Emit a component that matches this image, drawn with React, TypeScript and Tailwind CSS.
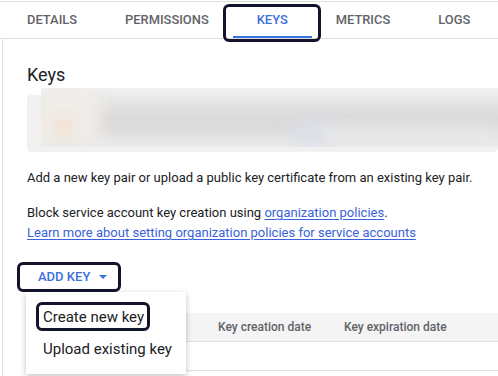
import React from "react";

const tabs = ["DETAILS", "PERMISSIONS", "KEYS", "METRICS", "LOGS"];

function Highlight({ className }: { className: string }) {
  return <div className={`pointer-events-none absolute rounded-[6px] border-[3px] border-[#12142b] ${className}`} />;
}

function TabBar() {
  return (
    <div className="flex h-[38px] border-y border-[#e0e0e0] pl-[3px]">
      {tabs.map((t) => {
        const active = t === "KEYS";
        return (
          <div
            key={t}
            className={`relative flex h-full items-center px-6 text-[12.9px] font-medium ${
              active ? "text-[#3b6fdc]" : "text-[#5f6368]"
            }`}
          >
            {t}
            {active && (
              <>
                <div className="absolute bottom-0 left-0 right-0 h-[2px] bg-[#3b6fdc]" />
                <Highlight className="-left-[10px] -right-[9px] top-[2px] h-[38px]" />
              </>
            )}
          </div>
        );
      })}
    </div>
  );
}

function BlurredKey() {
  return (
    <div className="relative mt-2 h-[57px] rounded bg-[#f1f1f1]">
      <div className="absolute -top-[7px] left-[14px] right-0 h-[59px] overflow-hidden bg-[linear-gradient(180deg,#f2f2f2_0%,#e4e4e4_25%,#dadada_50%,#dcdcdc_70%,#ececec_100%)]">
        <div className="absolute -left-[10px] top-0 h-full w-[70px] bg-[#f0ece8] blur-[8px]" />
        <div className="absolute left-[12px] top-[28px] h-[22px] w-[22px] rounded-full bg-[#f1e3d6] blur-[6px]" />
        <div className="absolute left-[250px] top-[34px] h-[24px] w-[50px] rounded-full bg-[#dcdfea] blur-[8px]" />
        <div className="absolute left-[280px] top-[40px] h-[18px] w-[180px] rounded-full bg-[#e9e9e9] blur-[8px]" />
      </div>
    </div>
  );
}

function AddKeyMenu() {
  return (
    <div className="absolute left-[-1px] top-[33px] z-10 flex w-[160px] flex-col bg-white py-[9px] text-[15px] font-normal text-[#202124] shadow-[0_2px_6px_rgba(0,0,0,0.25)]">
      <div className="relative flex h-[32px] items-center pl-[17px]">
        Create new key
        <Highlight className="left-[10px] top-[1px] h-[29px] w-[114px]" />
      </div>
      <div className="flex h-[32px] items-center pl-[17px]">Upload existing key</div>
    </div>
  );
}

export default function App() {
  return (
    <div className="relative flex h-[376px] w-[498px] flex-col overflow-hidden bg-white pt-px font-[Roboto,sans-serif]">
      <TabBar />
      <div className="ml-[2px] flex flex-1 flex-col border-l border-[#e0e0e0] pl-6">
        <h2 className="mt-6 text-[18px] leading-6 text-[#202124]">Keys</h2>
        <BlurredKey />
        <p className="mt-4 whitespace-nowrap text-[13px] leading-5 text-[#202124]">
          Add a new key pair or upload a public key certificate from an existing key pair.
        </p>
        <p className="mt-[15px] whitespace-nowrap text-[13px] leading-5 text-[#202124]">
          Block service account key creation using{" "}
          <span className="text-[#3b62d8] underline underline-offset-2">organization policies</span>.
          <br />
          <span className="text-[#3b62d8] underline underline-offset-2">
            Learn more about setting organization policies for service accounts
          </span>
        </p>
        <div className="relative mt-4 flex h-[36px] w-fit items-center gap-[9px] pl-[11px] pr-[14px] text-[13px] font-medium text-[#3b6fdc]">
          ADD KEY
          <svg width="8" height="4" viewBox="0 0 8 4">
            <path d="M0 0h8L4 4z" fill="#3b6fdc" />
          </svg>
          <Highlight className="-left-[10px] top-[3px] h-[30px] w-[104px]" />
          <AddKeyMenu />
        </div>
        <div className="mt-[18px] flex flex-col">
          <div className="flex h-[29px] items-center border-b border-[#e0e0e0] bg-[#f4f4f4] text-[12px] font-medium text-[#5f6368]">
            <div className="w-[191px]" />
            <div className="w-[126px]">Key creation date</div>
            <div>Key expiration date</div>
          </div>
          <div className="h-[29px] border-b border-[#e0e0e0]" />
        </div>
      </div>
    </div>
  );
}
